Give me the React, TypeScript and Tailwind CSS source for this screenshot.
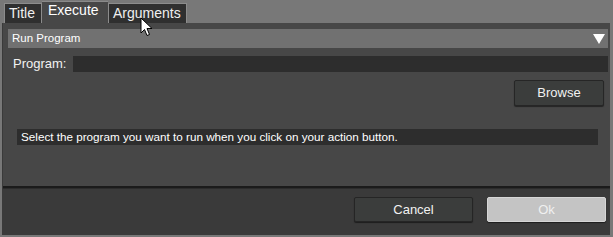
import React from "react";

export default function App() {
  const font = { fontFamily: '"Liberation Sans", Arial, sans-serif' };
  return (
    <div
      className="relative w-[613px] h-[237px] bg-[#787878] flex flex-col pl-[2px] pr-[3px] pb-[2px] overflow-hidden"
      style={font}
    >
      {/* Tab strip */}
      <div className="h-[23px] flex items-end pl-[2px] shrink-0">
        <div className="h-[20px] w-[38px] bg-[#2f2f2f] border border-b-0 border-[#8c8c8c] text-[14px] leading-[18px] text-[#f0f0f0] pl-[4px]">
          Title
        </div>
        <div className="h-[22px] w-[66px] bg-[#474747] border-t border-[#8a8a8a] text-[14px] leading-[16px] text-white pl-[6px]">
          Execute
        </div>
        <div className="h-[20px] w-[79px] bg-[#2f2f2f] border border-b-0 border-[#8c8c8c] text-[14px] leading-[18px] text-[#f0f0f0] pl-[4px]">
          Arguments
        </div>
      </div>

      {/* Body */}
      <div className="flex-1 flex flex-col bg-[#474747] border-l border-[#3a3a3a]">
        <div className="h-[163px] flex flex-col pl-[5px] pr-[2px] pt-[6px]">
          <div className="h-[19px] bg-[#717171] flex items-center justify-between pl-[4px] pr-[3px]">
            <span className="text-[11.5px] text-white">Run Program</span>
            <svg width="12" height="10" viewBox="0 0 12 10">
              <polygon points="0,0 12,0 6,10" fill="#ffffff" />
            </svg>
          </div>
          <div className="flex items-center mt-[8px] h-[16px]">
            <span className="w-[65px] pl-[5px] text-[13px] text-[#f2f2f2] leading-[16px]">Program:</span>
            <div className="flex-1 h-[16px] bg-[#2d2d2d]" />
          </div>
          <div className="flex justify-end mt-[8px] pr-[4px]">
            <button className="w-[90px] h-[26px] bg-[#3b3d3c] border border-[#262626] rounded-[2px] text-[13px] text-[#f2f2f2] shadow-[0_1px_1px_rgba(0,0,0,0.5)]">
              Browse
            </button>
          </div>
          <div className="mt-[23px] ml-[9px] mr-[10px] h-[16px] bg-[#2d2d2d] flex items-center pl-[4px]">
            <span className="text-[11.7px] text-white leading-[16px]">
              Select the program you want to run when you click on your action button.
            </span>
          </div>
        </div>
        <div className="h-[3px] bg-[#1b1b1b] border-b border-[#2c2c2c]" />
        <div className="flex-1 bg-[#3a3a3a] flex justify-end items-start gap-[14px] pt-[8px] pr-[4px]">
          <button className="w-[119px] h-[25px] bg-[#3b3d3c] border border-[#252525] rounded-[2px] text-[13px] text-[#f2f2f2] shadow-[0_1px_1px_rgba(0,0,0,0.5)]">
            Cancel
          </button>
          <button className="w-[119px] h-[25px] bg-[#c4c4c4] border border-[#d6d6d6] rounded-[2px] text-[13px] text-[#f0f0f0] shadow-[0_1px_1px_rgba(0,0,0,0.5)]">
            Ok
          </button>
        </div>
      </div>

      {/* Mouse cursor */}
      <svg className="absolute left-[140px] top-[17px]" width="13" height="20" viewBox="0 0 13 20">
        <path d="M1 1 L1 16 L4.5 12.5 L7 18.5 L9.5 17.5 L7 11.5 L12 11.5 Z" fill="#ffffff" stroke="#000000" strokeWidth="1" />
      </svg>
    </div>
  );
}
